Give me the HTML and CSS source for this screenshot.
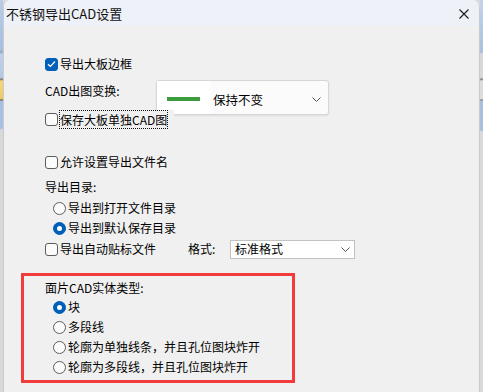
FILE: index.html
```html
<!DOCTYPE html>
<html>
<head>
<meta charset="utf-8">
<link rel="stylesheet" href="styles.css">
</head>
<body>
<div class="screen">
  <div class="strip strip-left"></div>
  <div class="dialog">
    <div class="titlebar">
      <span class="title">不锈钢导出CAD设置</span>
      <svg class="close" width="10" height="10" viewBox="0 0 10 10"><path d="M0.5 0.5L9.5 9.5M9.5 0.5L0.5 9.5" stroke="#1a1a1a" stroke-width="1.1" fill="none"/></svg>
    </div>
    <div class="content">
      <div class="row r1"><span class="cb checked"><svg width="9" height="8" viewBox="0 0 9 8"><path d="M1 4.2L3.4 6.5L8 1.5" stroke="#fff" stroke-width="1.2" fill="none"/></svg></span><span class="lbl">导出大板边框</span></div>
      <div class="row r2">
        <span class="txt">CAD出图变换:</span>
        <div class="combo">
          <div class="combo-left"><span class="greenline"></span></div>
          <span class="combo-text">保持不变</span>
          <svg class="chev" width="9" height="5" viewBox="0 0 9 5"><path d="M0.5 0.5L4.5 4.5L8.5 0.5" stroke="#555" stroke-width="1" fill="none"/></svg>
        </div>
      </div>
      <div class="row r3"><span class="cb"></span><span class="lbl focus">保存大板单独CAD图</span></div>
      <div class="row r4"><span class="cb"></span><span class="lbl">允许设置导出文件名</span></div>
      <div class="row r5"><span class="txt">导出目录:</span></div>
      <div class="row rad"><span class="rb"></span><span class="lbl">导出到打开文件目录</span></div>
      <div class="row rad"><span class="rb on"></span><span class="lbl">导出到默认保存目录</span></div>
      <div class="row r8">
        <span class="cb"></span><span class="lbl auto">导出自动贴标文件</span>
        <span class="txt fmt">格式:</span>
        <div class="select"><span>标准格式</span><svg class="chev" width="9" height="5" viewBox="0 0 9 5"><path d="M0.5 0.5L4.5 4.5L8.5 0.5" stroke="#555" stroke-width="1" fill="none"/></svg></div>
      </div>
      <div class="redbox">
        <div class="row rb-head"><span class="txt">面片CAD实体类型:</span></div>
        <div class="row rad"><span class="rb on"></span><span class="lbl">块</span></div>
        <div class="row rad"><span class="rb"></span><span class="lbl">多段线</span></div>
        <div class="row rad"><span class="rb"></span><span class="lbl">轮廓为单独线条，并且孔位图块炸开</span></div>
        <div class="row rad"><span class="rb"></span><span class="lbl">轮廓为多段线，并且孔位图块炸开</span></div>
      </div>
      <div class="row last"><span class="txt">导出文件格式:</span></div>
    </div>
  </div>
  <div class="strip strip-right"></div>
</div>
</body>
</html>
```

FILE: styles.css
```css
* { box-sizing: border-box; }
html, body { margin: 0; padding: 0; }
body {
  width: 483px;
  height: 392px;
  overflow: hidden;
  font-family: "Noto Sans CJK SC", "Noto Sans", sans-serif;
  font-size: 12px;
  color: #000;
  background: #dcdcdc;
}
.screen {
  display: flex;
  width: 483px;
  height: 392px;
}
.strip { width: 3px; flex: none; }
.strip-left {
  background: linear-gradient(to bottom,
    #b9cde6 0, #a6bfdf 50px, #8fa6c4 52px, #c0d2e8 54px, #b3c8e3 78px,
    #6c6c6c 79px, #f3d77a 81px, #f0c860 99px, #555 100px,
    #a9c1e0 101px, #a9c1e0 128px, #d9d9d9 130px, #d9d9d9 100%);
}
.strip-right {
  background: linear-gradient(to bottom,
    #c4d4ea 0, #a9c0df 52px, #d8d8d8 54px, #d8d8d8 78px, #777 79px,
    #dcdcdc 81px, #dcdcdc 99px, #777 100px,
    #a9c1e0 101px, #a9c1e0 130px, #dadada 132px, #dadada 100%);
}
.dialog {
  width: 477px;
  flex: none;
  background: #f0f0f0;
  border-top-left-radius: 7px;
  border-top-right-radius: 7px;
  overflow: hidden;
  border-left: 1px solid #c8ccd2;
  border-right: 1px solid #c8ccd2;
}
.titlebar {
  height: 26px;
  background: #eef2f8;
  display: flex;
  align-items: center;
  justify-content: space-between;
  padding: 0 10px 0 2px;
}
.title {
  font-size: 13px;
  color: #111;
  line-height: 16px;
  padding-top: 1px;
}
.close { margin-top: 1px; }
.content {
  padding-left: 41px;
  padding-top: 28px;
}
.row {
  display: flex;
  align-items: center;
  height: 20px;
  white-space: nowrap;
}
.lbl, .txt { line-height: 16px; }
.cb {
  width: 13px;
  height: 13px;
  border: 1px solid #5c5c5c;
  border-radius: 3px;
  background: #fbfbfb;
  margin-right: 2px;
  flex: none;
  display: flex;
  align-items: center;
  justify-content: center;
}
.cb.checked {
  background: #005fb8;
  border-color: #005fb8;
}
.rb {
  width: 13px;
  height: 13px;
  border: 1px solid #5c5c5c;
  border-radius: 50%;
  background: #fbfbfb;
  margin-left: 8px;
  margin-right: 2px;
  flex: none;
  display: flex;
  align-items: center;
  justify-content: center;
}
.rb.on {
  background: #005fb8;
  border-color: #005fb8;
}
.rb.on::after {
  content: "";
  width: 5px;
  height: 5px;
  border-radius: 50%;
  background: #fff;
}
.r2 { margin-top: 7px; position: relative; }
.r2 .txt { width: 73px; flex: none; }
.combo {
  margin-left: 38px;
  align-self: flex-start;
  margin-top: -1px;
  width: 173px;
  height: 35px;
  flex: none;
  background: #fbfbfb;
  border: 1px solid #d6d6d6;
  border-radius: 3px;
  box-shadow: 0 1px 2px rgba(0,0,0,0.08);
  display: flex;
  align-items: center;
  position: relative;
  z-index: 0;
}
.combo-left {
  width: 53px;
  height: 100%;
  background: #fff;
  display: flex;
  align-items: center;
  padding-left: 10px;
}
.greenline {
  width: 33px;
  height: 4px;
  background: #3c9b3c;
  margin-top: 3px;
}
.combo-text {
  margin-left: 3px;
  font-size: 12.5px;
  margin-top: 3px;
}
.combo .chev { margin-left: auto; margin-right: 7px; margin-top: 3px; }
.r3 { margin-top: 8px; position: relative; z-index: 1; }
.focus {
  outline: 1px dotted #111;
  outline-offset: 0;
  padding: 1px 0 0 0;
  height: 17px;
  background: #f0f0f0;
  position: relative;
}
.focus::after {
  content: "";
  position: absolute;
  right: -7px;
  top: -1px;
  width: 6px;
  height: 19px;
  background: #f0f0f0;
}
.r4 { margin-top: 23px; }
.r5 { margin-top: 5px; }
.rad { margin-top: 0; }
.r5 + .rad { margin-top: 1px; }
.r8 { margin-top: 1px; }
.auto { width: 96px; flex: none; }
.fmt { margin-left: 32px; width: 30px; flex: none; }
.select {
  margin-left: 12px;
  width: 125px;
  height: 19px;
  background: #fff;
  border: 1px solid #c2c2c2;
  display: flex;
  align-items: center;
  padding-left: 4px;
  line-height: 16px;
  flex: none;
}
.select .chev { margin-left: auto; margin-right: 4px; }
.redbox {
  margin-top: 14px;
  margin-left: -24px;
  width: 274px;
  height: 110px;
  border: 3px solid #f23b3b;
  padding-left: 21px;
  padding-top: 2px;
}
.redbox .rb-head { height: 19px; }
.last { margin-top: 5px; }
```
